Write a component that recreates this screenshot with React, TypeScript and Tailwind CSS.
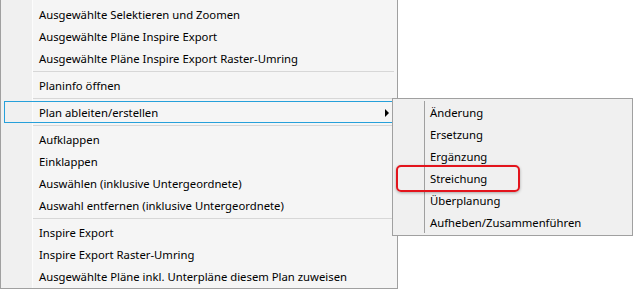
import React from 'react'

type Entry = { label: string; sep?: false; sub?: boolean } | { sep: true };

const MAIN: Entry[] = [
  { label: 'Ausgewählte Selektieren und Zoomen' },
  { label: 'Ausgewählte Pläne Inspire Export' },
  { label: 'Ausgewählte Pläne Inspire Export Raster-Umring' },
  { sep: true },
  { label: 'Planinfo öffnen' },
  { sep: true },
  { label: 'Plan ableiten/erstellen', sub: true },
  { sep: true },
  { label: 'Aufklappen' },
  { label: 'Einklappen' },
  { label: 'Auswählen (inklusive Untergeordnete)' },
  { label: 'Auswahl entfernen (inklusive Untergeordnete)' },
  { sep: true },
  { label: 'Inspire Export' },
  { label: 'Inspire Export Raster-Umring' },
  { label: 'Ausgewählte Pläne inkl. Unterpläne diesem Plan zuweisen' },
];

const SUB = ['Änderung', 'Ersetzung', 'Ergänzung', 'Streichung', 'Überplanung', 'Aufheben/Zusammenführen'];

export default function App() {
  return (
    <div className="relative w-[638px] h-[290px] bg-white overflow-hidden text-[11.3px] text-[#000] font-['Segoe_UI','Noto_Sans',sans-serif] leading-none">
      {/* Main context menu */}
      <div className="w-[398px] h-[289px] border-l border-r border-b border-[#a0a0a0] pt-[3px] bg-[linear-gradient(to_right,#f0f0f0_31px,#fcfcfc_31px,#fcfcfc_32px,#f5f5f5_32px)]">
        {MAIN.map((e, i) =>
          e.sep ? (
            <div key={i} className="h-[5px] pt-[2px] pl-[32px] pr-[3px]">
              <div className="h-px bg-[#d7d7d7]" />
            </div>
          ) : e.sub ? (
            <div key={i} className="h-[22px] mx-[3px] border border-[#26a0da] flex items-center pl-[34px] pr-[4px] pt-px">
              <span>{e.label}</span>
              <span className="ml-auto w-0 h-0 border-l-[4px] border-l-black border-y-[4px] border-y-transparent" />
            </div>
          ) : (
            <div key={i} className="h-[22px] flex items-center pl-[38px] pt-px">
              {e.label}
            </div>
          )
        )}
      </div>

      {/* Submenu */}
      <div className="absolute left-[392px] top-[98px] w-[241px] h-[138px] border border-[#a0a0a0] bg-[#f0f0f0] py-[2px]">
        <div className="ml-[31px] border-l border-[#a0a0a0] pl-[5px]">
          {SUB.map((s) => (
            <div key={s} className="h-[22px] flex items-center pt-px">
              {s}
            </div>
          ))}
        </div>
      </div>

      {/* Red annotation */}
      <div className="absolute left-[396px] top-[165px] w-[124px] h-[27px] border-2 border-[#e3141c] rounded-[5px] shadow-[0_1px_3px_rgba(0,0,0,0.3)]" />
    </div>
  )
}
